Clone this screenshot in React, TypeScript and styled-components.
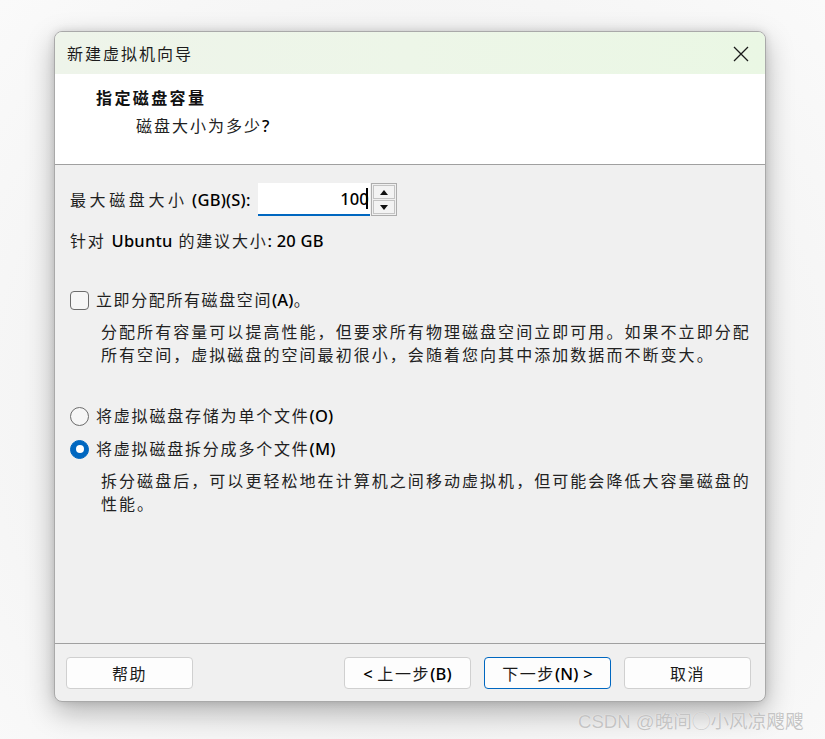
import React from "react";
import styled, { createGlobalStyle } from "styled-components";

const Global = createGlobalStyle`
  html, body { margin: 0; padding: 0; }
  body {
    background: #f7f7f7;
    font-family: "Noto Sans", "Noto Sans CJK SC", sans-serif;
    color: #1a1a1a;
  }
  * { box-sizing: border-box; }
`;

const Page = styled.div`
  position: relative;
  width: 825px;
  height: 739px;
  padding: 31px 0 0 54px;
  background: radial-gradient(ellipse at 50% 55%, #e4e4e4 0%, #f4f4f4 60%, #fafafa 100%);
`;

const Window = styled.div`
  width: 712px;
  height: 671px;
  border: 1px solid #a9a9a9;
  border-radius: 8px;
  overflow: hidden;
  display: flex;
  flex-direction: column;
  background: #f0f0f0;
  box-shadow: 0 10px 28px rgba(0, 0, 0, 0.28), 0 0 8px rgba(0, 0, 0, 0.12);
`;

const TitleBar = styled.div`
  height: 42px;
  flex: none;
  display: flex;
  align-items: center;
  justify-content: space-between;
  padding: 0 16px 0 12px;
  background: linear-gradient(90deg, #eef4ea 0%, #edf6e8 50%, #eaf7e4 100%);
`;

const TitleText = styled.span`
  font-size: 16px;
  letter-spacing: 2px;
  color: #1c1c1c;
`;

const CloseIcon = styled.svg`
  width: 16px;
  height: 16px;
  margin-top: 1px;
`;

const Header = styled.div`
  height: 91px;
  flex: none;
  background: #ffffff;
  border-bottom: 1px solid #a0a0a0;
  padding: 12px 0 0 0;
  display: flex;
  flex-direction: column;
`;

const HeaderTitle = styled.div`
  font-size: 16px;
  font-weight: 700;
  line-height: 24px;
  letter-spacing: 2.4px;
  padding-left: 41px;
  color: #111;
`;

const HeaderSub = styled.div`
  font-size: 16px;
  line-height: 24px;
  letter-spacing: 2px;
  padding-left: 81px;
  margin-top: 4px;
  color: #222;
`;

const Body = styled.div`
  flex: 1;
  padding: 18px 15px 0 15px;
  display: flex;
  flex-direction: column;
`;

const SizeRow = styled.div`
  display: flex;
  align-items: center;
  height: 33px;
`;

const Label = styled.span<{ $ls?: number }>`
  font-size: 16px;
  line-height: 22px;
  letter-spacing: ${(p) => p.$ls ?? 1.8}px;
  color: #1f1f1f;
`;

const Latin = styled.span`
  letter-spacing: 0.2px;
  font-weight: 500;
  color: #000;
  font-size: 16.5px;
`;

const NumberField = styled.div`
  margin-left: 7px;
  width: 112px;
  height: 33px;
  background: #ffffff;
  border-bottom: 2px solid #0067c0;
  display: flex;
  align-items: center;
  justify-content: flex-end;
  padding-right: 2px;
  font-size: 16.5px;
  font-weight: 500;
  color: #000;
`;

const Caret = styled.span`
  display: inline-block;
  width: 2px;
  height: 21px;
  background: #000;
  margin-left: -3px;
`;

const Spinner = styled.div`
  width: 26px;
  height: 33px;
  margin-left: 1px;
  border: 1px solid #adadad;
  display: flex;
  flex-direction: column;
  padding: 1px;
  gap: 1px;
  background: #f0f0f0;
`;

const SpinBtn = styled.div`
  flex: 1;
  border: 1px solid #c4c4c4;
  background: #f3f3f3;
  display: flex;
  align-items: center;
  justify-content: center;
`;

const Arrow = styled.div<{ $up?: boolean }>`
  width: 0;
  height: 0;
  border-left: 4.5px solid transparent;
  border-right: 4.5px solid transparent;
  ${(p) => (p.$up ? "border-bottom: 5px solid #111;" : "border-top: 5px solid #111;")}
`;

const Recommend = styled.div`
  margin-top: 14px;
  font-size: 16px;
  line-height: 22px;
  letter-spacing: 1.8px;
  color: #1f1f1f;
`;

const OptionRow = styled.div<{ $mt: number }>`
  display: flex;
  align-items: center;
  gap: 7px;
  margin-top: ${(p) => p.$mt}px;
  height: 24px;
`;

const CheckBox = styled.div`
  width: 19px;
  height: 19px;
  border: 1px solid #6c6c6c;
  border-radius: 4px;
  background: #f6f6f6;
  flex: none;
`;

const Radio = styled.div<{ $checked?: boolean }>`
  width: 19px;
  height: 19px;
  border-radius: 50%;
  flex: none;
  display: flex;
  align-items: center;
  justify-content: center;
  ${(p) =>
    p.$checked
      ? "background: #0067c0; border: 1px solid #0067c0;"
      : "background: #f6f6f6; border: 1px solid #6c6c6c;"}
`;

const RadioDot = styled.div`
  width: 8px;
  height: 8px;
  border-radius: 50%;
  background: #ffffff;
`;

const Desc = styled.div<{ $mt: number }>`
  margin-top: ${(p) => p.$mt}px;
  padding-left: 31px;
  font-size: 16px;
  line-height: 23px;
  letter-spacing: 2.05px;
  color: #222;
  width: 740px;
`;

const Footer = styled.div`
  height: 58px;
  flex: none;
  border-top: 1px solid #a0a0a0;
  display: flex;
  align-items: flex-start;
  padding: 13px 14px 0 11px;
`;

const Spacer = styled.div`
  flex: 1;
`;

const Button = styled.div<{ $primary?: boolean }>`
  width: 127px;
  height: 32px;
  border-radius: 4px;
  background: #fdfdfd;
  border: 1px solid ${(p) => (p.$primary ? "#0067c0" : "#d0d0d0")};
  display: flex;
  align-items: center;
  justify-content: center;
  font-size: 16px;
  letter-spacing: 1.6px;
  color: #1a1a1a;
`;

const ButtonGroup = styled.div`
  display: flex;
  gap: 13px;
`;

const Watermark = styled.div`
  position: absolute;
  left: 578px;
  top: 706px;
  font-size: 18.6px;
  color: #c4c4c4;
  text-shadow: 0 0 1px #ffffff;
  font-family: "Liberation Sans", "Noto Sans CJK SC", sans-serif;
`;

export default function App() {
  return (
    <>
      <Global />
      <Page>
        <Window>
          <TitleBar>
            <TitleText>新建虚拟机向导</TitleText>
            <CloseIcon viewBox="0 0 16 16">
              <path d="M1 1 L15 15 M15 1 L1 15" stroke="#1a1a1a" strokeWidth="1.3" fill="none" />
            </CloseIcon>
          </TitleBar>
          <Header>
            <HeaderTitle>指定磁盘容量</HeaderTitle>
            <HeaderSub>
              磁盘大小为多少<Latin>?</Latin>
            </HeaderSub>
          </Header>
          <Body>
            <SizeRow>
              <Label $ls={3.6}>
                最大磁盘大小<Latin> (GB)(S):</Latin>
              </Label>
              <NumberField>
                100
                <Caret />
              </NumberField>
              <Spinner>
                <SpinBtn>
                  <Arrow $up />
                </SpinBtn>
                <SpinBtn>
                  <Arrow />
                </SpinBtn>
              </Spinner>
            </SizeRow>
            <Recommend>
              针对 <Latin>Ubuntu</Latin> 的建议大小<Latin>: 20 GB</Latin>
            </Recommend>
            <OptionRow $mt={36}>
              <CheckBox />
              <Label $ls={1.6}>
                立即分配所有磁盘空间<Latin>(A)</Latin>。
              </Label>
            </OptionRow>
            <Desc $mt={9}>
              分配所有容量可以提高性能，但要求所有物理磁盘空间立即可用。如果不立即分配
              <br />
              所有空间，虚拟磁盘的空间最初很小，会随着您向其中添加数据而不断变大。
            </Desc>
            <OptionRow $mt={37}>
              <Radio />
              <Label $ls={1.8}>
                将虚拟磁盘存储为单个文件<Latin>(O)</Latin>
              </Label>
            </OptionRow>
            <OptionRow $mt={9}>
              <Radio $checked>
                <RadioDot />
              </Radio>
              <Label $ls={1.8}>
                将虚拟磁盘拆分成多个文件<Latin>(M)</Latin>
              </Label>
            </OptionRow>
            <Desc $mt={9}>
              拆分磁盘后，可以更轻松地在计算机之间移动虚拟机，但可能会降低大容量磁盘的
              <br />
              性能。
            </Desc>
          </Body>
          <Footer>
            <Button>帮助</Button>
            <Spacer />
            <ButtonGroup>
              <Button>
                <Latin>&lt;&nbsp;</Latin>上一步<Latin>(B)</Latin>
              </Button>
              <Button $primary>
                下一步<Latin>(N) &gt;</Latin>
              </Button>
              <Button>取消</Button>
            </ButtonGroup>
          </Footer>
        </Window>
        <Watermark>CSDN @晚间◯小风凉飕飕</Watermark>
      </Page>
    </>
  );
}
